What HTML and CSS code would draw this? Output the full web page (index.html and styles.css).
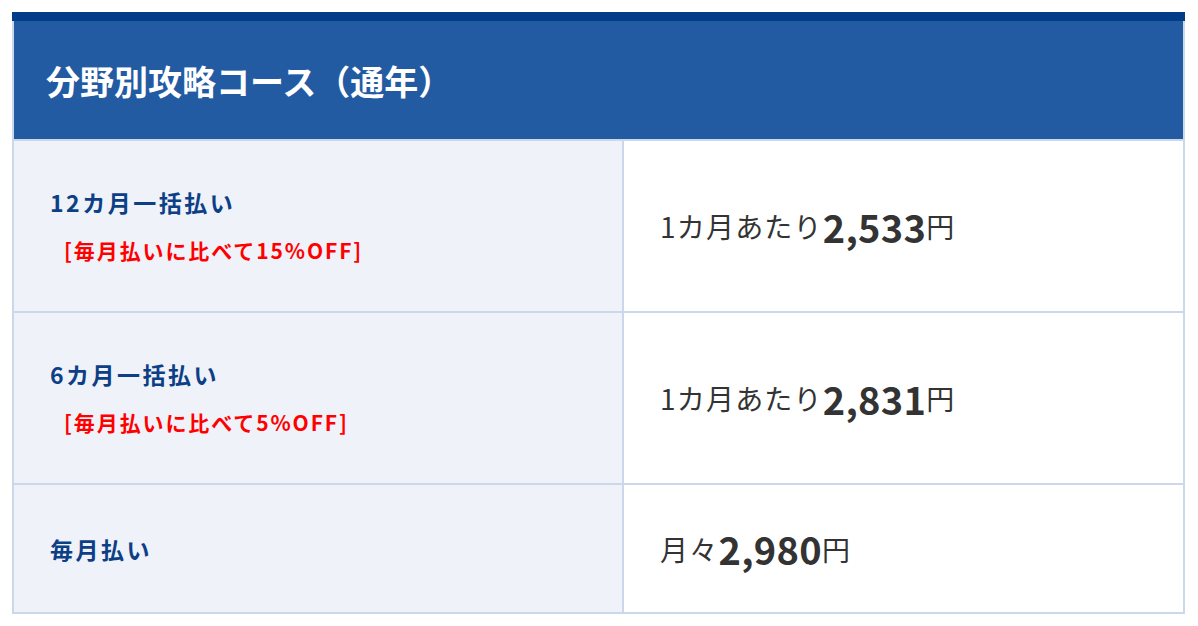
FILE: index.html
```html
<!DOCTYPE html>
<html lang="ja">
<head>
    <meta charset="UTF-8">
    <meta name="viewport" content="width=device-width, initial-scale=1.0">
    <title>分野別攻略コース（通年）</title>
    <link rel="stylesheet" href="styles.css">
</head>
<body>
    <div class="plan">
        <div class="plan-grid">
            <h2 class="plan-head">分野別攻略コース（通年）</h2>

            <div class="plan-name">
                <p class="plan-title">12カ月一括払い</p>
                <p class="plan-note">[毎月払いに比べて15%OFF]</p>
            </div>
            <div class="plan-price">1カ月あたり<strong>2,533</strong>円</div>

            <div class="plan-name">
                <p class="plan-title">6カ月一括払い</p>
                <p class="plan-note">[毎月払いに比べて5%OFF]</p>
            </div>
            <div class="plan-price">1カ月あたり<strong>2,831</strong>円</div>

            <div class="plan-name">
                <p class="plan-title">毎月払い</p>
            </div>
            <div class="plan-price">月々<strong>2,980</strong>円</div>
        </div>
    </div>
</body>
</html>
```

FILE: styles.css
```css
/* Global Styles */
body {
    margin: 0;
    background: #fff;
    font-family: "Noto Sans CJK JP", "Noto Sans", sans-serif;
}

/* Plan Table */
.plan {
    margin: 12px;
    width: 1173px;
    border-top: 9px solid #003c87;
}

.plan-grid {
    display: grid;
    grid-template-columns: 608px 1fr;
    grid-template-rows: 118px 170px 170px 127px;
    gap: 2px;
    background-color: #cbd7ea;
    border: 2px solid #cbd7ea;
    border-top: none;
}

.plan-head {
    grid-column: 1 / -1;
    margin: 0;
    padding-left: 32px;
    display: flex;
    align-items: center;
    background-color: #235ba3;
    color: #fff;
    font-size: 34px;
    font-weight: bold;
}

/* Left column */
.plan-name {
    background-color: #eff2f8;
    padding-left: 36px;
    display: flex;
    flex-direction: column;
    justify-content: center;
}

.plan-title {
    margin: 0;
    color: #0d3f86;
    font-size: 23px;
    font-weight: bold;
    letter-spacing: 2.5px;
    line-height: 28px;
}

.plan-note {
    margin: 20px 0 0 14px;
    color: #f00;
    font-size: 21px;
    font-weight: bold;
    letter-spacing: 1.9px;
    line-height: 28px;
}

/* Right column */
.plan-price {
    background-color: #fff;
    padding-left: 36px;
    display: flex;
    align-items: center;
    margin-top: 0;
    color: #333;
    font-size: 28px;
    letter-spacing: 1.2px;
}

.plan-price strong {
    font-size: 38px;
    font-weight: bold;
    letter-spacing: 0.3px;
}
```
